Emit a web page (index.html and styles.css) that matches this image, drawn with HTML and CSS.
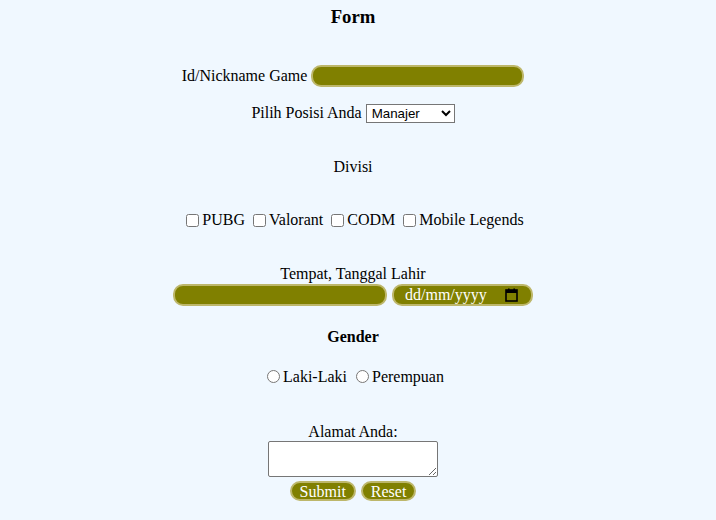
FILE: index.html
```html
<!DOCTYPE html>
<html lang="id">
<head>
<meta charset="utf-8">
<title>Form</title>
<link rel="stylesheet" href="styles.css">
</head>
<body>
<form class="form">
  <h3 class="title">Form</h3>

  <div class="row row-id">
    <label for="nick">Id/Nickname Game</label>
    <input id="nick" class="field field-nick" type="text">
  </div>

  <div class="row row-pos">
    <label for="pos">Pilih Posisi Anda</label>
    <select id="pos" class="select">
      <option>Manajer</option>
      <option>Pelatih</option>
      <option>Pemain</option>
      <option>Analis</option>
    </select>
  </div>

  <div class="row row-divisi">Divisi</div>

  <div class="row row-check">
    <label class="opt"><input type="checkbox">PUBG</label>
    <label class="opt"><input type="checkbox">Valorant</label>
    <label class="opt"><input type="checkbox">CODM</label>
    <label class="opt"><input type="checkbox">Mobile Legends</label>
  </div>

  <div class="row row-ttl">Tempat, Tanggal Lahir</div>
  <div class="row row-ttl-fields">
    <input class="field field-place" type="text">
    <span class="field date-field">
      <span class="date-text">dd/mm/yyyy</span>
      <svg class="cal" width="13" height="14" viewBox="0 0 13 14" aria-hidden="true">
        <rect x="1" y="2" width="11" height="11" fill="none" stroke="#000" stroke-width="1.6"/>
        <rect x="1" y="2" width="11" height="3" fill="#000"/>
        <rect x="3" y="0.5" width="1.6" height="3" fill="#000"/>
        <rect x="8.4" y="0.5" width="1.6" height="3" fill="#000"/>
      </svg>
    </span>
  </div>

  <div class="row row-gender">Gender</div>

  <div class="row row-radio">
    <label class="opt"><input type="radio" name="g">Laki-Laki</label>
    <label class="opt"><input type="radio" name="g">Perempuan</label>
  </div>

  <div class="row row-alamat">Alamat Anda:</div>
  <div class="row row-area">
    <textarea class="area"></textarea>
  </div>

  <div class="row row-btn">
    <button type="submit" class="btn">Submit</button>
    <button type="reset" class="btn">Reset</button>
  </div>
</form>
</body>
</html>
```

FILE: styles.css
```css
html, body {
  margin: 0;
  padding: 0;
  background: #f0f8ff;
}

body {
  font-family: "Liberation Serif", "Times New Roman", serif;
  font-size: 16px;
  color: #000;
}

.form {
  width: 706px;
  margin: 0;
}

.title {
  margin: 6px 0 0;
  height: 22px;
  line-height: 22px;
  font-size: 18.72px;
  font-weight: bold;
  text-align: center;
}

.row {
  display: flex;
  justify-content: center;
  align-items: center;
  box-sizing: border-box;
  height: 22px;
}

.row-id { margin-top: 37px; gap: 4px; }
.row-pos { margin-top: 15px; gap: 4px; }
.row-divisi { margin-top: 32px; }
.row-check { margin-top: 31px; }
.row-ttl { margin-top: 31px; padding-top: 2px; }
.row-ttl-fields { margin-top: 0; gap: 5px; }
.row-gender { margin-top: 19px; font-weight: bold; padding-top: 2px; }
.row-radio { margin-top: 19px; }
.row-alamat { margin-top: 33px; height: 20px; padding-top: 2px; }
.row-area { height: 36px; margin-top: 0; }
.row-btn { margin-top: 4px; height: 20px; gap: 5px; }

.field {
  box-sizing: border-box;
  height: 22px;
  background: #808000;
  border: 2px solid #bdb76b;
  border-radius: 10px;
  color: #fff;
  font-family: "Liberation Serif", serif;
  font-size: 16px;
  padding: 0 8px;
  outline: none;
}

.field-nick { width: 213px; }
.field-place { width: 214px; }

.date-field {
  display: inline-flex;
  align-items: center;
  width: 141px;
  padding: 0 13px 0 11px;
}

.date-text {
  line-height: 18px;
  color: #fff;
}

.cal {
  margin-left: auto;
  display: block;
}

.select {
  box-sizing: border-box;
  width: 89px;
  height: 19px;
  font-family: "Liberation Sans", Arial, sans-serif;
  font-size: 13.33px;
  border: 1px solid #767676;
  border-radius: 0;
  background: #fff;
  color: #000;
  padding: 0 0 0 1px;
}

.opt {
  display: inline-flex;
  align-items: center;
  margin-right: 4px;
}

.opt:last-child { margin-right: 0; }

.opt input[type="checkbox"] {
  width: 13px;
  height: 13px;
  margin: 3px 3px 3px 4px;
}

.opt input[type="radio"] {
  width: 13px;
  height: 13px;
  margin: 2px 3px 3px 5px;
}

.area {
  box-sizing: border-box;
  width: 170px;
  height: 36px;
  border: 1px solid #767676;
  border-radius: 2px;
  background: #fff;
  margin: 0;
}

.btn {
  box-sizing: border-box;
  height: 20px;
  padding: 1px 8px 0;
  background: #808000;
  color: #fff;
  border: 2px solid #bdb76b;
  border-radius: 10px;
  font-family: "Liberation Serif", serif;
  font-size: 16px;
  line-height: 14px;
}
```
